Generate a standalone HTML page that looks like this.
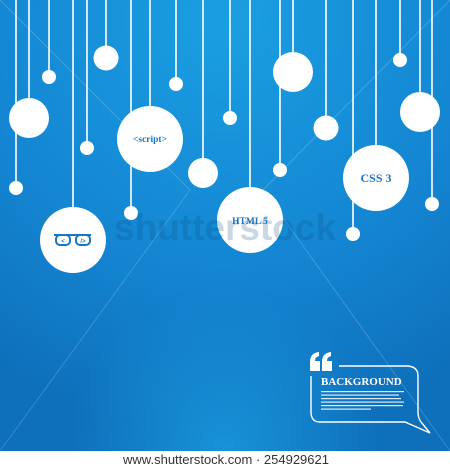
<!DOCTYPE html>
<html><head><meta charset="utf-8"><style>
html,body{margin:0;padding:0;background:#fff;width:450px;height:470px;overflow:hidden}
svg{display:block}
</style></head><body>
<svg width="450" height="470" viewBox="0 0 450 470" xmlns="http://www.w3.org/2000/svg">
<defs>
<radialGradient id="bg" cx="225" cy="20" r="420" gradientUnits="userSpaceOnUse">
<stop offset="0" stop-color="#1a9fe2"/>
<stop offset="0.6" stop-color="#1485d2"/>
<stop offset="1" stop-color="#0e6fba"/>
</radialGradient>
<radialGradient id="bg2" cx="225" cy="450" r="160" gradientUnits="userSpaceOnUse">
<stop offset="0" stop-color="#1a9be0" stop-opacity="0.8"/>
<stop offset="1" stop-color="#1a9be0" stop-opacity="0"/>
</radialGradient>
</defs>
<rect x="0" y="0" width="450" height="451" fill="url(#bg)"/>
<rect x="0" y="0" width="450" height="451" fill="url(#bg2)"/>
<g stroke="#ffffff" stroke-opacity="0.18" stroke-width="1">
<line x1="0" y1="0" x2="190" y2="190"/><line x1="190" y1="190" x2="0" y2="451"/>
<line x1="450" y1="0" x2="263" y2="190"/><line x1="263" y1="190" x2="450" y2="451"/>
</g>
<g stroke="#fff" stroke-width="1.6">
<line x1="16" y1="0" x2="16" y2="188"/><line x1="29" y1="0" x2="29" y2="118"/>
<line x1="49" y1="0" x2="49" y2="77"/><line x1="73" y1="0" x2="73" y2="240"/>
<line x1="87" y1="0" x2="87" y2="148"/><line x1="106" y1="0" x2="106" y2="58"/>
<line x1="131" y1="0" x2="131" y2="213"/><line x1="150" y1="0" x2="150" y2="139"/>
<line x1="176" y1="0" x2="176" y2="84"/><line x1="203" y1="0" x2="203" y2="173"/>
<line x1="230" y1="0" x2="230" y2="118"/><line x1="250" y1="0" x2="250" y2="220"/>
<line x1="280" y1="0" x2="280" y2="170"/><line x1="293" y1="0" x2="293" y2="72"/>
<line x1="326" y1="0" x2="326" y2="128"/><line x1="353" y1="0" x2="353" y2="234"/>
<line x1="376" y1="0" x2="376" y2="178"/><line x1="400" y1="0" x2="400" y2="60"/>
<line x1="420" y1="0" x2="420" y2="112"/><line x1="432" y1="0" x2="432" y2="204"/>
</g>
<g fill="#fff">
<circle cx="16" cy="188" r="7"/><circle cx="29" cy="118" r="20"/>
<circle cx="49" cy="77" r="7"/><circle cx="73" cy="240" r="33"/>
<circle cx="87" cy="148" r="7"/><circle cx="106" cy="58" r="12.5"/>
<circle cx="131" cy="213" r="7"/><circle cx="150" cy="139" r="33"/>
<circle cx="176" cy="84" r="7"/><circle cx="203" cy="173" r="15"/>
<circle cx="230" cy="118" r="7"/><circle cx="250" cy="220" r="33"/>
<circle cx="280" cy="170" r="7"/><circle cx="293" cy="72" r="20"/>
<circle cx="326" cy="128" r="12.5"/><circle cx="353" cy="234" r="7"/>
<circle cx="376" cy="178" r="33"/><circle cx="400" cy="60" r="7"/>
<circle cx="420" cy="112" r="20"/><circle cx="432" cy="204" r="7"/>
</g>
<g fill="#1876c4" font-family="Liberation Serif, serif" font-weight="bold" text-anchor="middle">
<text x="150" y="142" font-size="9.5">&lt;script&gt;</text>
<text x="250" y="224" font-size="9.5">HTML 5</text>
<text x="376" y="182" font-size="12">CSS 3</text>
</g>
<g stroke="#1876c4" stroke-width="2" fill="none">
<path d="M54 235 h37"/>
<rect x="56" y="235" width="14" height="10" rx="4"/>
<rect x="76" y="235" width="14" height="10" rx="4"/>
</g>
<g fill="#1876c4" font-family="Liberation Sans, sans-serif" font-size="6" font-weight="bold" text-anchor="middle">
<text x="63" y="243">&lt;</text><text x="83" y="243">/&gt;</text>
</g>
<text x="225" y="240" font-family="Liberation Sans, sans-serif" font-size="37" font-weight="bold" fill="#0b4f80" fill-opacity="0.22" text-anchor="middle">shutterstock</text>
<g fill="#fff">
<path d="M310 362 Q310 353 319 352 L319 356 Q315 357 315 361 H320 V371 H310 Z"/>
<path d="M322 362 Q322 353 331 352 L331 356 Q327 357 327 361 H332 V371 H322 Z"/>
</g>
<path d="M339 366 H406 Q418 366 418 376 V412 Q418 418 421 422 L430 433 L405 422 H320 Q311 422 311 412 V376" fill="none" stroke="#fff" stroke-width="1.4"/>
<text x="321" y="385" font-family="Liberation Serif, serif" font-size="11" font-weight="bold" fill="#fff">BACKGROUND</text>
<g fill="#fff" fill-opacity="0.85">
<rect x="321" y="391" width="83" height="1.2"/><rect x="321" y="394.5" width="78" height="1.2"/>
<rect x="321" y="398" width="80" height="1.2"/><rect x="321" y="401.5" width="83" height="1.2"/>
<rect x="321" y="405" width="82" height="1.2"/><rect x="321" y="408.5" width="50" height="1.2"/>
</g>
<text x="226" y="464" font-family="Liberation Sans, sans-serif" font-size="13" fill="#333" text-anchor="middle">www.shutterstock.com · 254929621</text>
</svg>
</body></html>
